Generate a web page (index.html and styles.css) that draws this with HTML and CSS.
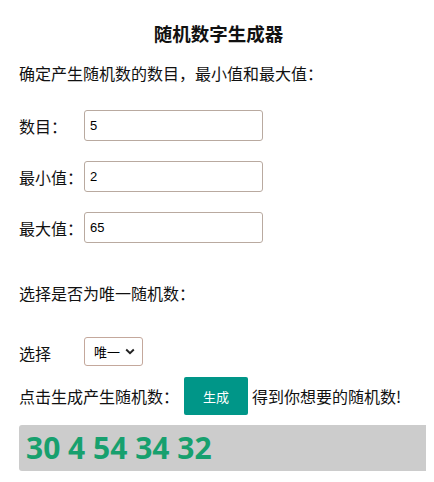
FILE: index.html
```html
<!DOCTYPE html>
<html lang="zh-CN">
<head>
  <meta charset="UTF-8" />
  <meta name="viewport" content="width=device-width, initial-scale=1.0" />
  <title>随机数字生成器</title>
  <link rel="stylesheet" href="styles.css">
</head>
<body>
  <div class="wrap">
    <h1>随机数字生成器</h1>
    <p class="intro">确定产生随机数的数目，最小值和最大值：</p>

    <div class="row">
      <label for="count">数目：</label>
      <input class="num-input" id="count" type="text" value="5" />
    </div>
    <div class="row">
      <label for="min">最小值：</label>
      <input class="num-input" id="min" type="text" value="2" />
    </div>
    <div class="row">
      <label for="max">最大值：</label>
      <input class="num-input" id="max" type="text" value="65" />
    </div>

    <p class="unique-title">选择是否为唯一随机数：</p>

    <div class="row select-row">
      <label for="unique">选择</label>
      <div class="select-box">
        <span>唯一</span>
        <svg width="10" height="7" viewBox="0 0 10 7"><path d="M1.2 1.5 L5 5.2 L8.8 1.5" fill="none" stroke="#222" stroke-width="1.9"/></svg>
      </div>
    </div>

    <div class="action-row">
      <span>点击生成产生随机数：</span>
      <button class="gen-btn">生成</button>
      <span>得到你想要的随机数!</span>
    </div>

    <div class="result">30 4 54 34 32</div>
  </div>
</body>
</html>
```

FILE: styles.css
```css
body {
  margin: 8px;
  font-family: "Noto Sans CJK SC", "Noto Sans", sans-serif;
  color: #111;
  background: #fff;
}
.wrap {
  padding: 0 0 0 11px;
}
h1 {
  margin: 13px 0 0;
  padding-right: 8px;
  font-size: 18.5px;
  line-height: 24px;
  text-align: center;
  font-weight: bold;
}
.intro {
  margin: 16px 0 0;
  font-size: 16px;
  line-height: 24px;
}
.row {
  display: flex;
  align-items: center;
  height: 31px;
  margin-top: 20px;
  font-size: 16px;
}
.row:first-of-type {
  margin-top: 25px;
}
.row label {
  width: 65px;
  flex-shrink: 0;
}
.num-input {
  box-sizing: border-box;
  width: 179px;
  height: 31px;
  border: 1px solid #b9aaa0;
  border-radius: 3px;
  padding: 0 5px;
  font-family: "Liberation Sans", Arial, sans-serif;
  font-size: 13px;
  color: #000;
}
.unique-title {
  margin: 38px 0 0;
  font-size: 16px;
  line-height: 24px;
}
.select-row {
  height: 29px;
  margin-top: 32px;
}
.select-row label {
  padding-top: 3px;
}
.select-box {
  box-sizing: border-box;
  width: 59px;
  height: 29px;
  border: 1px solid #c4a89c;
  border-radius: 3px;
  display: flex;
  align-items: center;
  justify-content: space-between;
  padding: 0 7px 0 9px;
  font-size: 13px;
  color: #000;
}
.action-row {
  display: flex;
  align-items: center;
  margin-top: 11px;
  height: 38px;
  font-size: 16px;
}
.gen-btn {
  width: 64px;
  height: 38px;
  margin: 0 4px 0 0;
  border: none;
  border-radius: 2px;
  background: #009688;
  color: #fff;
  font-family: "Noto Sans CJK SC", sans-serif;
  font-size: 13px;
}
.action-row span:first-child {
  width: 165px;
}
.result {
  margin: 10px -3px 0 0;
  height: 46px;
  line-height: 46px;
  background: #cccccc;
  border-radius: 3px;
  padding-left: 7px;
  font-family: "Open Sans", sans-serif;
  font-weight: bold;
  font-size: 30px;
  color: #17a06e;
}
```
